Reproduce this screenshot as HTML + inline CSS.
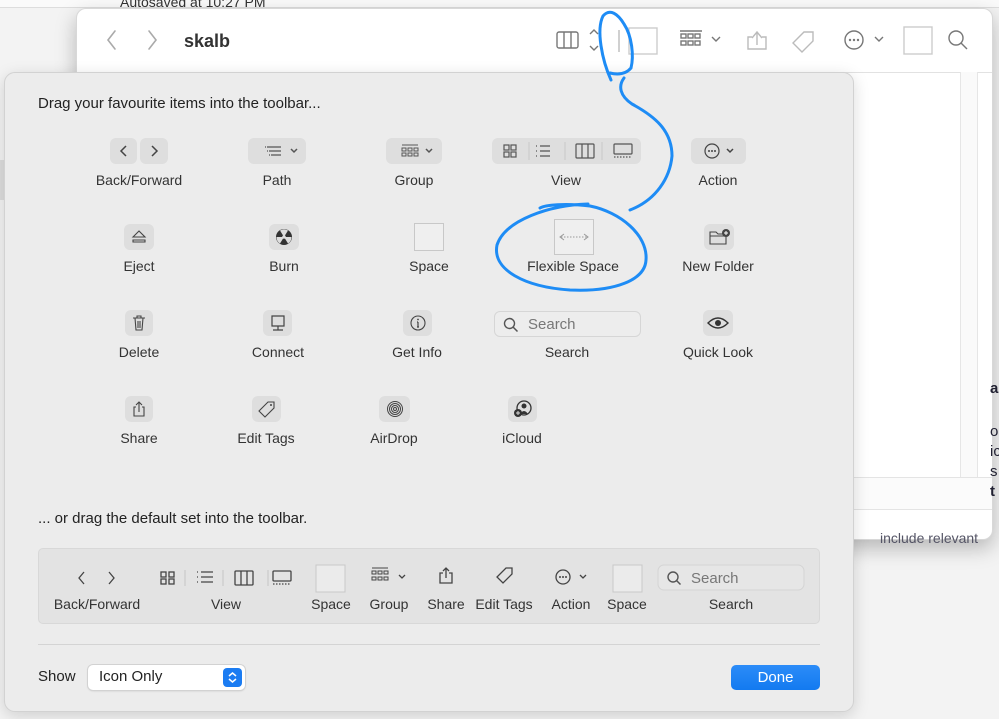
<!DOCTYPE html>
<html><head><meta charset="utf-8"><style>
*{margin:0;padding:0;box-sizing:border-box}
body{width:999px;height:719px;overflow:hidden;background:#f3f3f3;font-family:"Liberation Sans",sans-serif;color:#2a2a2a;position:relative}
.abs{position:absolute}
.lbl{position:absolute;font-size:14px;color:#333;transform:translateX(-50%);white-space:nowrap}
.btn{position:absolute;background:#dedede;border-radius:6px;display:flex;align-items:center;justify-content:center}
svg{display:block}
</style></head><body>
<!-- background doc -->
<div class="abs" style="left:100px;top:0;width:0;height:8px;border-left:1px solid #ccc"></div>
<div class="abs" style="left:0;top:0;width:999px;height:8px;background:#fafafa;border-bottom:1px solid #ddd"></div>
<div class="abs" style="left:120px;top:-6px;font-size:14px;color:#333">Autosaved at 10:27 PM</div>
<div class="abs" style="left:0;top:160px;width:8px;height:40px;background:#ddd"></div>
<!-- finder window -->
<div class="abs" style="left:76px;top:8px;width:917px;height:532px;background:#fff;border-radius:10px;box-shadow:0 8px 20px rgba(0,0,0,.25);border:1px solid #d8d8d8"></div>
<div class="abs" style="left:77px;top:72px;width:915px;border-top:1px solid #e2e2e2"></div>
<div class="abs" style="left:960px;top:72px;width:18px;height:405px;border-left:1px solid #e6e6e6;border-right:1px solid #e6e6e6;background:#fafafa"></div>
<div class="abs" style="left:854px;top:477px;width:138px;height:33px;border-top:1px solid #e4e4e4;border-bottom:1px solid #e4e4e4;background:#fbfbfb"></div>
<div class="abs" style="left:990px;top:380px;font-size:15px;font-weight:bold;color:#223">a</div>
<div class="abs" style="left:990px;top:422px;font-size:15px;color:#223;line-height:20px">o<br>ic<br>s<br><b>t</b></div>
<div class="abs" style="left:880px;top:530px;font-size:14px;color:#556">include relevant</div>
<!-- finder toolbar -->
<svg class="abs" style="left:100px;top:26px" width="880" height="30" viewBox="0 0 880 30">
<g fill="none" stroke="#aaa" stroke-width="1.6" stroke-linecap="round">
<path d="M15 5 L8 14 L15 23"/><path d="M49 5 L56 14 L49 23"/></g>
<text x="84" y="21" font-family="Liberation Sans" font-weight="bold" font-size="18" fill="#333">skalb</text>
<g fill="none" stroke="#777" stroke-width="1.4">
<rect x="457" y="6" width="21" height="16" rx="2"/><path d="M464 6v16M471 6v16"/>
<path d="M490 8l4-4 4 4M490 20l4 4 4-4"/>
<path d="M519 4v22" stroke="#bbb"/>
<rect x="529" y="2" width="28" height="26" stroke="#ccc"/>
<path d="M580 5h22" /><rect x="581" y="8" width="5" height="4"/><rect x="588" y="8" width="5" height="4"/><rect x="595" y="8" width="5" height="4"/><rect x="581" y="15" width="5" height="4"/><rect x="588" y="15" width="5" height="4"/><rect x="595" y="15" width="5" height="4"/>
<path d="M612 11l4 4 4-4"/>
<path d="M652 12l5-6 5 6M657 6v13M652 11h-4v12h18v-12h-4" stroke="#bbb"/>
<path d="M704 6l9 0 0 9-11 11-9-9z" stroke="#bbb"/>
<circle cx="754" cy="14" r="9"/><path d="M775 11l4 4 4-4"/>
<rect x="804" y="1" width="28" height="27" stroke="#ccc"/>
<circle cx="856" cy="12" r="7"/><path d="M861 17l6 6"/>
</g>
<g fill="#777"><circle cx="750" cy="14" r="1.2"/><circle cx="754" cy="14" r="1.2"/><circle cx="758" cy="14" r="1.2"/></g>
</svg>
<!-- sheet -->
<div class="abs" style="left:4px;top:72px;width:850px;height:640px;background:#ececec;border-radius:11px;border:1px solid #d2d2d2;box-shadow:0 4px 16px rgba(0,0,0,.15)"></div>
<div class="abs" style="left:38px;top:95px;font-size:15px;color:#222">Drag your favourite items into the toolbar...</div>
<!-- row1 -->
<div class="btn" style="left:110px;top:138px;width:27px;height:26px"><svg width="12" height="16"><path d="M8 3L3 8L8 13" fill="none" stroke="#444" stroke-width="1.5"/></svg></div>
<div class="btn" style="left:140px;top:138px;width:28px;height:26px"><svg width="12" height="16"><path d="M4 3L9 8L4 13" fill="none" stroke="#444" stroke-width="1.5"/></svg></div>
<div class="lbl" style="left:139px;top:172px">Back/Forward</div>
<div class="btn" style="left:248px;top:138px;width:58px;height:26px"><svg width="44" height="16"><g stroke="#555" stroke-width="1.2" fill="none"><path d="M12 4h14M14 8h12M16 12h10M10 4h1M12 8h1M14 12h1"/><path d="M36 6l3 3 3-3" stroke-width="1.5"/></g></svg></div>
<div class="lbl" style="left:277px;top:172px">Path</div>
<div class="btn" style="left:386px;top:138px;width:56px;height:26px"><svg width="44" height="16"><g stroke="#555" stroke-width="1" fill="none"><path d="M10 2h16"/><rect x="10" y="5" width="4" height="3"/><rect x="16" y="5" width="4" height="3"/><rect x="22" y="5" width="4" height="3"/><rect x="10" y="10" width="4" height="3"/><rect x="16" y="10" width="4" height="3"/><rect x="22" y="10" width="4" height="3"/><path d="M34 6l3 3 3-3" stroke-width="1.5"/></g></svg></div>
<div class="lbl" style="left:414px;top:172px">Group</div>
<div class="btn" style="left:492px;top:138px;width:149px;height:26px"><svg width="149" height="26"><g stroke="#555" stroke-width="1.2" fill="none"><rect x="12" y="7" width="5" height="5"/><rect x="19" y="7" width="5" height="5"/><rect x="12" y="14" width="5" height="5"/><rect x="19" y="14" width="5" height="5"/><path d="M37 4v18M73 4v18M110 4v18" stroke="#ccc"/><path d="M48 8h10M48 13h10M48 18h10M44 8h1M44 13h1M44 18h1"/><rect x="84" y="6" width="18" height="14" rx="1"/><path d="M90 6v14M96 6v14"/><rect x="122" y="6" width="18" height="10" rx="1"/><path d="M122 19h18" stroke-dasharray="1.5 1.5"/></g></svg></div>
<div class="lbl" style="left:566px;top:172px">View</div>
<div class="btn" style="left:691px;top:138px;width:55px;height:26px"><svg width="44" height="20"><g stroke="#444" stroke-width="1.2" fill="none"><circle cx="15" cy="10" r="7"/><path d="M30 8l3 3 3-3" stroke-width="1.5"/></g><g fill="#444"><circle cx="12" cy="10" r="1"/><circle cx="15" cy="10" r="1"/><circle cx="18" cy="10" r="1"/></g></svg></div>
<div class="lbl" style="left:718px;top:172px">Action</div>
<!-- row2 -->
<div class="btn" style="left:124px;top:224px;width:30px;height:26px"><svg width="16" height="14"><path d="M2 7L8 1L14 7Z M2 10h12v2H2z" fill="none" stroke="#444" stroke-width="1.1"/></svg></div>
<div class="lbl" style="left:139px;top:258px">Eject</div>
<div class="btn" style="left:269px;top:224px;width:30px;height:26px"><svg width="18" height="18"><circle cx="9" cy="9" r="8" fill="#333"/><path d="M9 9L5 2.5A7.5 7.5 0 0 1 13 2.5Z M9 9L16.5 9A7.5 7.5 0 0 1 13 15.5Z M9 9L5 15.5A7.5 7.5 0 0 1 1.5 9Z" fill="#ddd"/><circle cx="9" cy="9" r="1.8" fill="#ddd"/></svg></div>
<div class="lbl" style="left:284px;top:258px">Burn</div>
<div class="abs" style="left:414px;top:223px;width:30px;height:28px;background:#efefef;border:1px solid #c8c8c8"></div>
<div class="lbl" style="left:429px;top:258px">Space</div>
<div class="abs" style="left:554px;top:219px;width:40px;height:36px;background:#efefef;border:1px solid #c8c8c8"><svg width="38" height="34"><path d="M6 17h26" stroke="#999" stroke-dasharray="1.5 1.5"/><path d="M9 14l-4 3 4 3M29 14l4 3-4 3" fill="none" stroke="#999"/></svg></div>
<div class="lbl" style="left:573px;top:258px">Flexible Space</div>
<div class="btn" style="left:704px;top:224px;width:30px;height:26px"><svg width="22" height="18"><path d="M2 4h6l2 2h8v10H2z M2 8h16" fill="none" stroke="#444" stroke-width="1.1"/><circle cx="18" cy="5" r="4" fill="#444"/><path d="M18 3v4M16 5h4" stroke="#fff"/></svg></div>
<div class="lbl" style="left:718px;top:258px">New Folder</div>
<!-- row3 -->
<div class="btn" style="left:125px;top:310px;width:28px;height:26px"><svg width="16" height="18"><path d="M2 4h12M6 4V2h4v2M4 4l1 12h6l1-12M7 7v7M9 7v7" fill="none" stroke="#444" stroke-width="1.1"/></svg></div>
<div class="lbl" style="left:139px;top:344px">Delete</div>
<div class="btn" style="left:263px;top:310px;width:29px;height:26px"><svg width="18" height="18"><path d="M3 2h12v10H3z M9 12v4 M4 16h10" fill="none" stroke="#444" stroke-width="1.2"/></svg></div>
<div class="lbl" style="left:278px;top:344px">Connect</div>
<div class="btn" style="left:403px;top:310px;width:29px;height:26px"><svg width="18" height="18"><circle cx="9" cy="9" r="7" fill="none" stroke="#444" stroke-width="1.1"/><path d="M9 8v5M8 13h2M8 8h1" stroke="#444" stroke-width="1.2"/><circle cx="9" cy="5.5" r="0.9" fill="#444"/></svg></div>
<div class="lbl" style="left:417px;top:344px">Get Info</div>
<div class="abs" style="left:494px;top:311px;width:147px;height:26px;border:1px solid #d6d6d6;border-radius:6px;background:#ededed"><svg class="abs" style="left:8px;top:5px" width="16" height="16"><circle cx="6.5" cy="6.5" r="5" fill="none" stroke="#555" stroke-width="1.4"/><path d="M10 10l4.5 4.5" stroke="#555" stroke-width="1.5"/></svg><span class="abs" style="left:33px;top:4px;font-size:15px;color:#777">Search</span></div>
<div class="lbl" style="left:567px;top:344px">Search</div>
<div class="btn" style="left:703px;top:310px;width:30px;height:26px"><svg width="22" height="14"><path d="M1 7Q11 -3 21 7Q11 17 1 7Z" fill="none" stroke="#333" stroke-width="1.4"/><circle cx="11" cy="7" r="3" fill="#333"/></svg></div>
<div class="lbl" style="left:718px;top:344px">Quick Look</div>
<!-- row4 -->
<div class="btn" style="left:125px;top:396px;width:28px;height:26px"><svg width="16" height="18"><path d="M5 5l3-3 3 3M8 2v10M5 7H3v9h10V7h-2" fill="none" stroke="#444" stroke-width="1.1"/></svg></div>
<div class="lbl" style="left:139px;top:430px">Share</div>
<div class="btn" style="left:252px;top:396px;width:29px;height:26px"><svg width="18" height="18"><path d="M10 2h6v6l-9 9-6-6z" fill="none" stroke="#444" stroke-width="1.1"/><circle cx="13" cy="5" r="1" fill="#444"/></svg></div>
<div class="lbl" style="left:266px;top:430px">Edit Tags</div>
<div class="btn" style="left:379px;top:396px;width:31px;height:26px"><svg width="18" height="18" fill="none" stroke="#444" stroke-width="1"><circle cx="9" cy="9" r="7.5"/><circle cx="9" cy="9" r="5.5"/><circle cx="9" cy="9" r="3.5"/><circle cx="9" cy="9" r="1.5"/></svg></div>
<div class="lbl" style="left:394px;top:430px">AirDrop</div>
<div class="btn" style="left:508px;top:396px;width:29px;height:26px"><svg width="20" height="18"><circle cx="11" cy="8" r="7" fill="none" stroke="#333" stroke-width="1.3"/><circle cx="11" cy="6" r="2.5" fill="#333"/><path d="M7 14q4-6 8 0" fill="#333"/><circle cx="5" cy="13" r="4" fill="#333"/><path d="M5 11v4M3 13h4" stroke="#ddd"/></svg></div>
<div class="lbl" style="left:522px;top:430px">iCloud</div>
<!-- default set -->
<div class="abs" style="left:38px;top:510px;font-size:15px;color:#222">... or drag the default set into the toolbar.</div>
<div class="abs" style="left:38px;top:548px;width:782px;height:76px;background:#e3e3e3;border:1px solid #d8d8d8;border-radius:5px"></div>
<svg class="abs" style="left:38px;top:562px" width="782" height="32"><g fill="none" stroke="#444" stroke-width="1.3">
<path d="M46 10l-5 6 5 6M71 10l5 6-5 6"/>
<rect x="123" y="10" width="5" height="5"/><rect x="131" y="10" width="5" height="5"/><rect x="123" y="17" width="5" height="5"/><rect x="131" y="17" width="5" height="5"/>
<path d="M147 8v16M185 8v16M230 8v16" stroke="#ccc"/>
<path d="M163 10h12M163 15h12M163 20h12M159 10h1M159 15h1M159 20h1"/>
<rect x="197" y="9" width="18" height="14" rx="1"/><path d="M203 9v14M209 9v14"/>
<rect x="235" y="9" width="18" height="10" rx="1"/><path d="M235 22h18" stroke-dasharray="1.5 1.5"/>
<rect x="278" y="3" width="29" height="27" stroke="#c8c8c8" stroke-width="1" fill="#ebebeb"/>
<g stroke-width="1"><path d="M334 6h16"/><rect x="334" y="9" width="4" height="3"/><rect x="340" y="9" width="4" height="3"/><rect x="346" y="9" width="4" height="3"/><rect x="334" y="15" width="4" height="3"/><rect x="340" y="15" width="4" height="3"/><rect x="346" y="15" width="4" height="3"/></g>
<path d="M361 13l3 3 3-3"/>
<path d="M405 9l3-3 3 3M408 6v10M405 11h-3v10h12V11h-3"/>
<path d="M468 6h6v6l-9 9-6-6z"/>
<circle cx="525" cy="15" r="7"/><path d="M542 13l3 3 3-3"/>
<rect x="575" y="3" width="29" height="27" stroke="#c8c8c8" stroke-width="1" fill="#ebebeb"/>
</g><g fill="#444"><circle cx="522" cy="15" r="1"/><circle cx="525" cy="15" r="1"/><circle cx="528" cy="15" r="1"/></g>
<rect x="620" y="3" width="146" height="25" rx="6" fill="#e6e6e6" stroke="#d4d4d4"/>
<circle cx="635" cy="15" r="5" fill="none" stroke="#555" stroke-width="1.4"/><path d="M638.5 18.5l4 4" stroke="#555" stroke-width="1.5"/>
<text x="653" y="21" font-family="Liberation Sans" font-size="15" fill="#777">Search</text>
</svg>
<div class="lbl" style="left:97px;top:596px">Back/Forward</div>
<div class="lbl" style="left:226px;top:596px">View</div>
<div class="lbl" style="left:331px;top:596px">Space</div>
<div class="lbl" style="left:389px;top:596px">Group</div>
<div class="lbl" style="left:446px;top:596px">Share</div>
<div class="lbl" style="left:504px;top:596px">Edit Tags</div>
<div class="lbl" style="left:571px;top:596px">Action</div>
<div class="lbl" style="left:627px;top:596px">Space</div>
<div class="lbl" style="left:731px;top:596px">Search</div>
<div class="abs" style="left:38px;top:644px;width:782px;border-top:1px solid #d4d4d4"></div>
<div class="abs" style="left:38px;top:668px;font-size:15px;color:#222">Show</div>
<div class="abs" style="left:88px;top:665px;width:157px;height:25px;background:#fff;border-radius:5px;box-shadow:0 0 0 1px #d2d2d2,0 1px 2px rgba(0,0,0,.15)"><span class="abs" style="left:11px;top:3px;font-size:15px;color:#222">Icon Only</span><div class="abs" style="right:3px;top:3px;width:19px;height:19px;background:#1b7cf2;border-radius:4px"><svg width="19" height="19"><path d="M6 8l3.5-3 3.5 3M6 11l3.5 3 3.5-3" fill="none" stroke="#fff" stroke-width="1.5"/></svg></div></div>
<div class="abs" style="left:731px;top:665px;width:89px;height:25px;background:linear-gradient(#2c8cf8,#137af0);border-radius:5px;color:#fff;font-size:15px;text-align:center;line-height:25px">Done</div>
<!-- blue annotation -->
<svg class="abs" style="left:0;top:0" width="999" height="719"><g fill="none" stroke="#1e8cf5" stroke-width="3" stroke-linecap="round">
<path d="M611 80C602 60 596 30 603 16C610 8 618 14 624 24C632 36 634 56 631 68C626 74 618 75 610 73"/>
<path d="M624 78C618 86 620 96 632 104C654 116 672 130 672 156C670 178 656 200 630 210"/>
<path d="M588 204C550 205 505 220 497 245C492 270 525 287 570 290C615 292 645 280 646 260C648 235 620 212 590 206C565 203 545 205 540 208"/>
</g></svg>
</body></html>
